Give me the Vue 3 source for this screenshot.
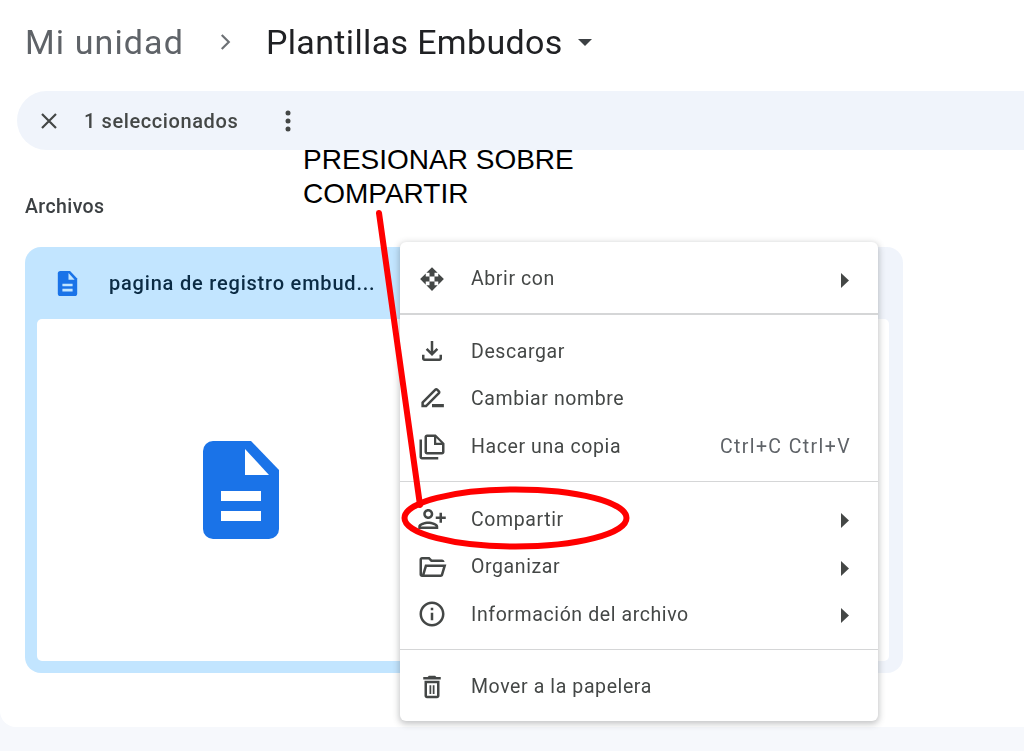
<template>
  <div class="page">
    <div class="surface">
      <header class="crumbs">
        <span class="crumb-root">Mi unidad</span>
        <svg class="crumb-sep" viewBox="0 0 24 24"><path d="M9 5.5l6.5 6.5L9 18.5" fill="none" stroke="#6d7175" stroke-width="2"/></svg>
        <span class="crumb-current">Plantillas Embudos</span>
        <svg class="crumb-caret" viewBox="0 0 14 7"><path d="M0 0h14L7 7z" fill="#3c4043"/></svg>
      </header>

      <div class="toolbar">
        <svg class="tool-close" viewBox="0 0 24 24"><path d="M5 5l14 14M19 5L5 19" fill="none" stroke="#444746" stroke-width="2.2"/></svg>
        <span class="tool-count">1 seleccionados</span>
        <svg class="tool-more" viewBox="0 0 6 24"><circle cx="3" cy="4" r="2.5"/><circle cx="3" cy="12" r="2.5"/><circle cx="3" cy="20" r="2.5"/></svg>
      </div>

      <h3 class="section">Archivos</h3>

      <div class="card">
        <div class="card-head">
          <svg class="doc-small" viewBox="0 0 76 98">
            <path :d="docPath" fill="#1a73e8"/>
            <path d="M42 8l24 26H42z" fill="#c2e5ff"/>
            <path d="M18 50h40v10H18zM18 70h40v10H18z" fill="#c2e5ff"/>
          </svg>
          <span class="card-name">pagina de registro embud...</span>
        </div>
        <div class="card-body">
          <svg class="doc-big" viewBox="0 0 76 98">
            <path :d="docPath" fill="#1a73e8"/>
            <path d="M42 8l24 26H42z" fill="#fff"/>
            <path d="M18 50h40v10H18zM18 70h40v10H18z" fill="#fff"/>
          </svg>
        </div>
      </div>
    </div>

    <ul class="menu">
      <template v-for="group in menu" :key="group[0].label">
        <li v-for="item in group" :key="item.label" class="row">
          <svg class="row-icon" viewBox="0 0 24 24"><path :d="item.icon" :transform="item.flip ? 'translate(24,0) scale(-1,1)' : null" fill="#444746" fill-rule="evenodd"/></svg>
          <span class="row-label">{{ item.label }}</span>
          <span v-if="item.keys" class="row-keys">{{ item.keys }}</span>
          <svg v-if="item.more" class="row-arrow" viewBox="0 0 8 15"><path d="M0 0l8 7.5L0 15z" fill="#444746"/></svg>
        </li>
        <li v-if="group !== menu[menu.length - 1]" class="divider"></li>
      </template>
    </ul>

    <p class="note">PRESIONAR SOBRE<br>COMPARTIR</p>
    <svg class="marks" viewBox="0 0 1024 751">
      <path d="M379 213L420 505" stroke="#f00" stroke-width="6" fill="none" stroke-linecap="round"/>
      <ellipse cx="515.5" cy="518" rx="111" ry="28.5" stroke="#f00" stroke-width="6" fill="none"/>
    </svg>
  </div>
</template>

<script setup>
const docPath = 'M10 0H48L76 29V88a10 10 0 0 1-10 10H10A10 10 0 0 1 0 88V10A10 10 0 0 1 10 0z'

const menu = [
  [
    { label: 'Abrir con', more: true, icon: 'M12 2.5l4.5 4.5H14v3h-4V7H7.5zM12 21.5L7.5 17H10v-3h4v3h2.5zM2.5 12L7 7.5V10h3v4H7v2.5zM21.5 12L17 16.5V14h-3v-4h3V7.5z' }
  ],
  [
    { label: 'Descargar', icon: 'M18 15v3H6v-3H4v3c0 1.1.9 2 2 2h12c1.1 0 2-.9 2-2v-3h-2zm-1-4l-1.41-1.41L13 12.17V4h-2v8.17L8.41 9.59 7 11l5 5 5-5z' },
    { label: 'Cambiar nombre', icon: 'M3.5 18.5v-4.2L14 3.8c.8-.8 2-.8 2.8 0l1.4 1.4c.8.8.8 2 0 2.8L7.7 18.5zM5.5 16.5h1.4L16.8 6.6l-1.4-1.4-9.9 9.9zM12 16h9.5v2.6H12z' },
    { label: 'Hacer una copia', keys: 'Ctrl+C Ctrl+V', icon: 'M15 2H8c-1.1 0-2 .9-2 2v12c0 1.1.9 2 2 2h12c1.1 0 2-.9 2-2V9zM20 16H8V4h5.6v6.4H20zM15.4 4.8l3.8 3.8h-3.8zM4 6H2v14c0 1.1.9 2 2 2h13v-2H4z' }
  ],
  [
    { label: 'Compartir', more: true, flip: true, icon: 'M15 12c2.21 0 4-1.79 4-4s-1.79-4-4-4-4 1.79-4 4 1.79 4 4 4zm0-6c1.1 0 2 .9 2 2s-.9 2-2 2-2-.9-2-2 .9-2 2-2zm0 8c-2.67 0-8 1.34-8 4v2h16v-2c0-2.66-5.33-4-8-4zm-6 4c.22-.72 3.31-2 6-2 2.7 0 5.8 1.29 6 2H9zm-3-3v-3h3v-2H6V7H4v3H1v2h3v3h2z' },
    { label: 'Organizar', more: true, icon: 'M4 20q-.825 0-1.412-.587Q2 18.825 2 18V6q0-.825.588-1.412Q3.175 4 4 4h6l2 2h8q.825 0 1.413.588Q22 7.175 22 8H11.175l-2-2H4v12l2.4-8h17.1l-2.575 8.575q-.2.65-.737 1.038Q19.65 20 19 20Zm2.1-2H19l1.8-6H7.9Z' },
    { label: 'Información del archivo', more: true, icon: 'M11 7h2v2h-2zm0 4h2v6h-2zm1-9C6.48 2 2 6.48 2 12s4.48 10 10 10 10-4.48 10-10S17.52 2 12 2zm0 18c-4.41 0-8-3.59-8-8s3.59-8 8-8 8 3.59 8 8-3.59 8-8 8z' }
  ],
  [
    { label: 'Mover a la papelera', icon: 'M6 19c0 1.1.9 2 2 2h8c1.1 0 2-.9 2-2V7H6v12zM8 9h8v10H8V9zm7.5-5l-1-1h-5l-1 1H5v2h14V4zM10 10.5h1.4v7H10zM12.6 10.5H14v7h-1.4z' }
  ]
]
</script>

<style scoped>
.page {
  position: relative;
  width: 1024px;
  height: 751px;
  overflow: hidden;
  background: #f6f8fc;
  font-family: Roboto, "Liberation Sans", sans-serif;
}
.surface {
  height: 727px;
  box-sizing: border-box;
  background: #fff;
  border-radius: 0 0 0 16px;
  padding: 21px 0 0 25px;
  filter: blur(0.5px);
}
.crumbs {
  display: flex;
  align-items: center;
  height: 42px;
}
.crumb-root {
  font-size: 34px;
  color: #5f6368;
  letter-spacing: 1.1px;
}
.crumb-sep {
  width: 26px;
  height: 26px;
  margin: 0 28px 0 28px;
}
.crumb-current {
  font-size: 34px;
  color: #202124;
  letter-spacing: 0.35px;
}
.crumb-caret {
  width: 14px;
  height: 7px;
  margin-left: 15px;
}
.toolbar {
  display: flex;
  align-items: center;
  height: 59px;
  margin: 28px 0 0 -8px;
  padding-left: 20px;
  background: #f0f4fb;
  border-radius: 30px 0 0 30px;
}
.tool-close {
  width: 24px;
  height: 24px;
}
.tool-count {
  margin-left: 23px;
  font-size: 20px;
  font-weight: 500;
  color: #444746;
  letter-spacing: 0.6px;
}
.tool-more {
  width: 6px;
  height: 24px;
  margin-left: 47px;
  fill: #444746;
}
.section {
  margin: 45px 0 0;
  font-size: 19.5px;
  line-height: 24px;
  font-weight: 500;
  color: #3c4043;
  letter-spacing: 0.4px;
}
.card {
  width: 878px;
  height: 426px;
  margin-top: 28px;
  box-sizing: border-box;
  padding: 0 14px 12px 12px;
  display: flex;
  flex-direction: column;
  border-radius: 16px;
  background: linear-gradient(90deg, #c2e5ff 375px, #f0f4fb 375px);
}
.card-head {
  display: flex;
  align-items: center;
  height: 72px;
  padding-left: 20px;
}
.doc-small {
  width: 21px;
  height: 25px;
}
.card-name {
  margin-left: 31px;
  font-size: 20px;
  font-weight: 500;
  color: #0b2b44;
  letter-spacing: 0.8px;
}
.card-body {
  flex: 1;
  display: flex;
  align-items: center;
  padding-left: 166px;
  background: #fff;
  border-radius: 5px;
}
.doc-big {
  width: 76px;
  height: 98px;
}
.menu {
  position: absolute;
  left: 400px;
  top: 242px;
  width: 478px;
  height: 479px;
  box-sizing: border-box;
  margin: 0;
  padding: 13px 0 0;
  list-style: none;
  background: #fff;
  border-radius: 6px;
  box-shadow: 0 2px 6px 1px rgba(60, 64, 67, 0.3);
  filter: blur(0.5px);
}
.row {
  display: flex;
  align-items: center;
  height: 47.6px;
  padding-left: 17px;
}
.row-icon {
  width: 30px;
  height: 30px;
  flex: none;
}
.row-label {
  margin-left: 24px;
  font-size: 19.5px;
  color: #444746;
  letter-spacing: 0.6px;
}
.row-keys {
  position: absolute;
  right: 27px;
  font-size: 19.5px;
  color: #5f6368;
  letter-spacing: 1.4px;
}
.row-arrow {
  position: absolute;
  right: 29px;
  width: 8px;
  height: 15px;
  margin-top: 3px;
}
.divider {
  height: 1.5px;
  margin: 10.5px 0 13px;
  background: #d5d6d7;
}
.note {
  position: absolute;
  left: 303px;
  top: 143px;
  margin: 0;
  font-family: "Liberation Sans", Arial, sans-serif;
  font-size: 28px;
  line-height: 34px;
  color: #000;
}
.marks {
  position: absolute;
  left: 0;
  top: 0;
  width: 1024px;
  height: 751px;
  pointer-events: none;
}
</style>
